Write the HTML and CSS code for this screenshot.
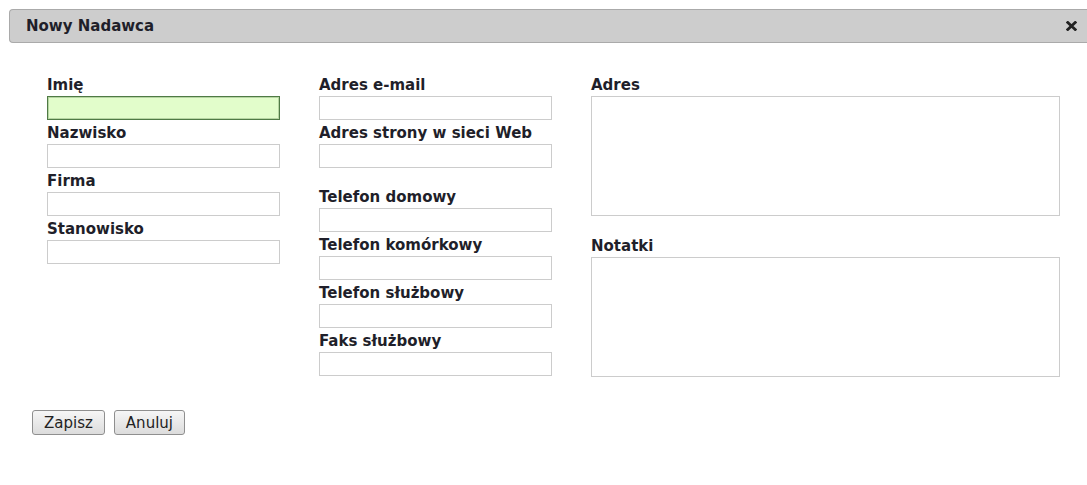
FILE: index.html
```html
<!DOCTYPE html>
<html lang="pl">
<head>
<meta charset="utf-8">
<title>Nowy Nadawca</title>
<link rel="stylesheet" href="styles.css">
</head>
<body>
<div class="dialog">
  <div class="titlebar">
    <span class="title">Nowy Nadawca</span>
    <span class="close" title="Zamknij">
      <svg width="11" height="10" viewBox="0 0 11 10"><path d="M1.8 1.5 L9.2 8.5 M9.2 1.5 L1.8 8.5" stroke="#222" stroke-width="2.8" stroke-linecap="square"/></svg>
    </span>
  </div>
  <form class="form">
    <div class="columns">
      <div class="col">
        <label class="field"><span class="lbl">Imię</span><input class="inp active" type="text"></label>
        <label class="field"><span class="lbl">Nazwisko</span><input class="inp" type="text"></label>
        <label class="field"><span class="lbl">Firma</span><input class="inp" type="text"></label>
        <label class="field"><span class="lbl">Stanowisko</span><input class="inp" type="text"></label>
      </div>
      <div class="col">
        <label class="field"><span class="lbl">Adres e-mail</span><input class="inp" type="text"></label>
        <label class="field"><span class="lbl">Adres strony w sieci Web</span><input class="inp" type="text"></label>
        <div class="spacer"></div>
        <label class="field"><span class="lbl">Telefon domowy</span><input class="inp" type="text"></label>
        <label class="field"><span class="lbl">Telefon komórkowy</span><input class="inp" type="text"></label>
        <label class="field"><span class="lbl">Telefon służbowy</span><input class="inp" type="text"></label>
        <label class="field"><span class="lbl">Faks służbowy</span><input class="inp" type="text"></label>
      </div>
      <div class="col wide">
        <label class="field"><span class="lbl">Adres</span><textarea class="area"></textarea></label>
        <label class="field notes"><span class="lbl">Notatki</span><textarea class="area"></textarea></label>
      </div>
    </div>
    <div class="buttons">
      <button type="button" class="btn">Zapisz</button>
      <button type="button" class="btn">Anuluj</button>
    </div>
  </form>
</div>
</body>
</html>
```
FILE: styles.css
```css
html, body {
  margin: 0;
  padding: 0;
  background: #fff;
}

body {
  font-family: "DejaVu Sans", Verdana, sans-serif;
  color: #222;
}

.dialog {
  padding: 9px 0 0 9px;
}

.titlebar {
  display: flex;
  align-items: center;
  justify-content: space-between;
  height: 32px;
  background: #cdcdcd;
  border: 1px solid #aaa;
  border-right: none;
  border-radius: 4px 0 0 4px;
  padding: 0 10px 0 16px;
}

.title {
  font-weight: bold;
  font-size: 15px;
  color: #1f1f2a;
}

.close {
  display: flex;
  width: 11px;
  height: 10px;
}

.form {
  padding: 33px 0 0 38px;
}

.columns {
  display: flex;
  gap: 39px;
}

.col {
  display: flex;
  flex-direction: column;
  width: 233px;
}

.col.wide {
  width: 469px;
}

.field {
  display: flex;
  flex-direction: column;
  height: 48px;
}

.lbl {
  font-size: 15px;
  font-weight: bold;
  line-height: 18px;
  height: 18px;
  margin-bottom: 2px;
  color: #1f1f2a;
  white-space: nowrap;
}

.inp {
  box-sizing: border-box;
  width: 233px;
  height: 24px;
  margin: 0;
  border: 1px solid #ccc;
  background: #fff;
  padding: 2px 4px;
  font: 13px "DejaVu Sans", sans-serif;
  outline: none;
}

.inp.active {
  background: #e2fdcb;
  border: 1px solid #4f7a45;
  box-shadow: 0 0 0 1px rgba(79, 122, 69, 0.3) inset;
}

.spacer {
  height: 16px;
}

.col.wide .field {
  height: auto;
}

.area {
  box-sizing: border-box;
  width: 469px;
  height: 120px;
  margin: 0;
  border: 1px solid #ccc;
  background: #fff;
  resize: none;
  outline: none;
}

.field.notes {
  margin-top: 21px;
}

.buttons {
  display: flex;
  gap: 9px;
  padding: 30px 0 0 0;
  margin-left: -15px;
}

.btn {
  height: 25px;
  padding: 0 11px;
  font: 15px "DejaVu Sans", Verdana, sans-serif;
  color: #222;
  background: linear-gradient(#f6f6f6, #dcdcdc);
  border: 1px solid #8f8f8f;
  border-radius: 3px;
}
```
